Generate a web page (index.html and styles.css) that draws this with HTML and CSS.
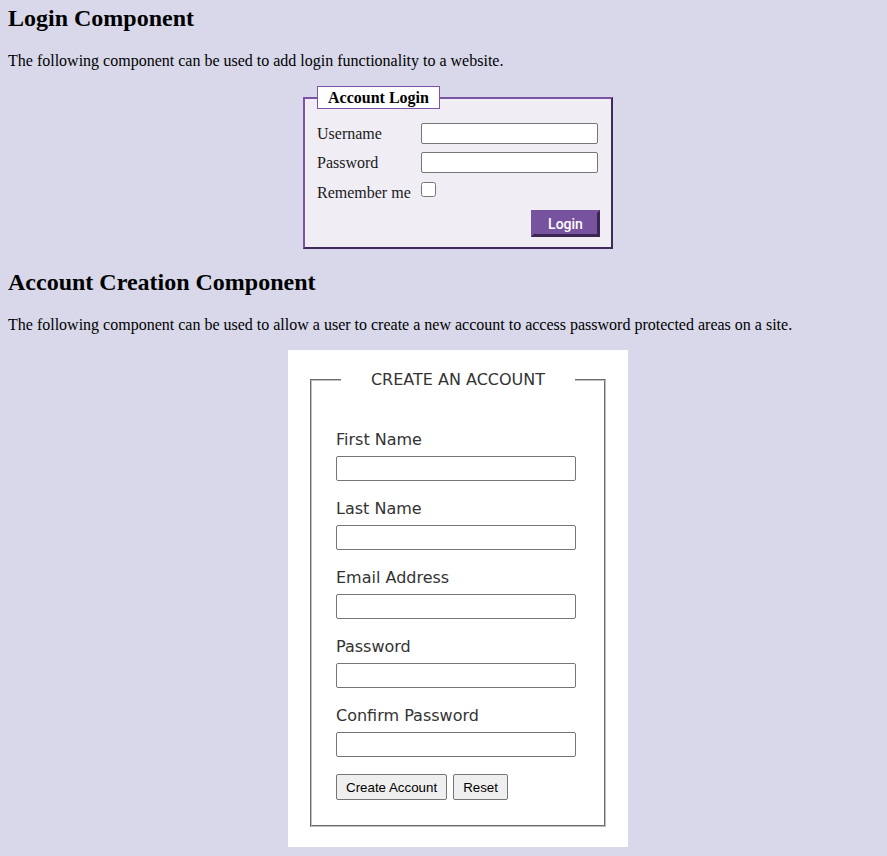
FILE: index.html
```html
<!DOCTYPE html>
<html>
<head>
<meta charset="utf-8">
<title>Components</title>
<link rel="stylesheet" href="styles.css">
</head>
<body>
<h2 class="title first">Login Component</h2>
<p class="intro">The following component can be used to add login functionality to a website.</p>
<fieldset class="login">
  <legend class="login-legend">Account Login</legend>
  <div class="login-grid">
    <label class="login-label" for="u">Username</label>
    <input class="login-input" id="u" type="text">
    <label class="login-label" for="p">Password</label>
    <input class="login-input" id="p" type="password">
    <label class="login-label remember" for="r">Remember me</label>
    <div class="check-cell"><input class="login-check" id="r" type="checkbox"></div>
  </div>
  <div class="login-actions"><button class="login-btn" type="button">Login</button></div>
</fieldset>

<h2 class="title">Account Creation Component</h2>
<p class="intro">The following component can be used to allow a user to create a new account to access password protected areas on a site.</p>
<div class="create-box">
  <fieldset class="create">
    <legend class="create-legend">CREATE AN ACCOUNT</legend>
    <div class="group first"><label class="create-label">First Name</label><input class="create-input" type="text"></div>
    <div class="group"><label class="create-label">Last Name</label><input class="create-input" type="text"></div>
    <div class="group"><label class="create-label">Email Address</label><input class="create-input" type="text"></div>
    <div class="group"><label class="create-label">Password</label><input class="create-input" type="password"></div>
    <div class="group"><label class="create-label">Confirm Password</label><input class="create-input" type="password"></div>
    <div class="create-actions">
      <button class="plain-btn" type="button">Create Account</button>
      <button class="plain-btn" type="button">Reset</button>
    </div>
  </fieldset>
</div>
</body>
</html>
```
FILE: styles.css
```css
html, body {
  margin: 0;
  padding: 0;
}
body {
  background: #d8d8ea;
  padding: 0 8px;
  font-family: "Liberation Serif", "Times New Roman", serif;
  font-size: 16px;
  color: #000;
}
.title {
  font-size: 24px;
  font-weight: bold;
  margin: 20px 0 20px 0;
  line-height: normal;
}
.title.first {
  margin-top: 5px;
}
.intro {
  margin: 16px 0;
  line-height: normal;
}

/* Login */
.login {
  box-sizing: border-box;
  width: 310px;
  margin: 16px 0 0 295px;
  padding: 14px 12px 10px 12px;
  background: #f0edf5;
  border: 2px solid;
  border-color: #7b55a3 #3f2a5c #3f2a5c #7b55a3;
}
.login-legend {
  background: #fff;
  border: 1px solid #7b55a3;
  padding: 2px 10px;
  font-size: 16px;
  font-weight: bold;
  line-height: 17px;
}
.login-grid {
  display: grid;
  grid-template-columns: 104px 177px;
  row-gap: 8px;
  align-items: center;
}
.login-label {
  color: #1a1a1a;
  line-height: 18px;
}
.login-label.remember {
  align-self: start;
  padding-top: 2px;
  margin-top: 1px;
}
.login-input {
  box-sizing: border-box;
  width: 177px;
  height: 21px;
  margin: 0;
  border: 1px solid #767676;
  border-radius: 2px;
  background: #fff;
  padding: 1px 2px;
}
.check-cell {
  display: flex;
  align-items: flex-start;
  align-self: start;
}
.login-check {
  width: 15px;
  height: 15px;
  margin: 1px 0 0 0;
}
.login-actions {
  display: flex;
  justify-content: flex-end;
  margin-top: 8px;
  margin-right: -1px;
}
.login-btn {
  box-sizing: border-box;
  width: 69px;
  height: 27px;
  padding: 0;
  background: #77529e;
  color: #fff;
  font-family: Roboto, "Liberation Sans", Arial, sans-serif;
  font-size: 14px;
  font-weight: 500;
  border: 3px solid;
  border-color: #77529e #3a2553 #3a2553 #77529e;
}

/* Create account */
.create-box {
  box-sizing: border-box;
  width: 340px;
  margin: 16px 0 0 280px;
  padding: 20px;
  background: #fff;
}
.create {
  margin: 0 2px;
  padding: 34px 24px 25px 24px;
  border: 2px groove #c0c0c0;
  font-family: "DejaVu Sans", Verdana, sans-serif;
  color: #333;
}
.create-legend {
  margin: 0 auto;
  padding: 0 30px;
  font-size: 16px;
  line-height: 19px;
  color: #333;
}
.group {
  display: flex;
  flex-direction: column;
  align-items: flex-start;
  margin-top: 18px;
}
.group.first {
  margin-top: 7px;
}
.create-label {
  font-size: 16px;
  line-height: 19px;
  margin-bottom: 7px;
}
.create-input {
  box-sizing: border-box;
  width: 240px;
  height: 25px;
  margin: 0;
  border: 1px solid #767676;
  border-radius: 2px;
  background: #fff;
}
.create-actions {
  display: flex;
  gap: 6px;
  margin-top: 17px;
}
.plain-btn {
  box-sizing: border-box;
  height: 26px;
  padding: 0 9px;
  background: #efefef;
  border: 1px solid #767676;
  border-radius: 2px;
  font-family: "Liberation Sans", Arial, sans-serif;
  font-size: 13.33px;
  color: #000;
}
```
